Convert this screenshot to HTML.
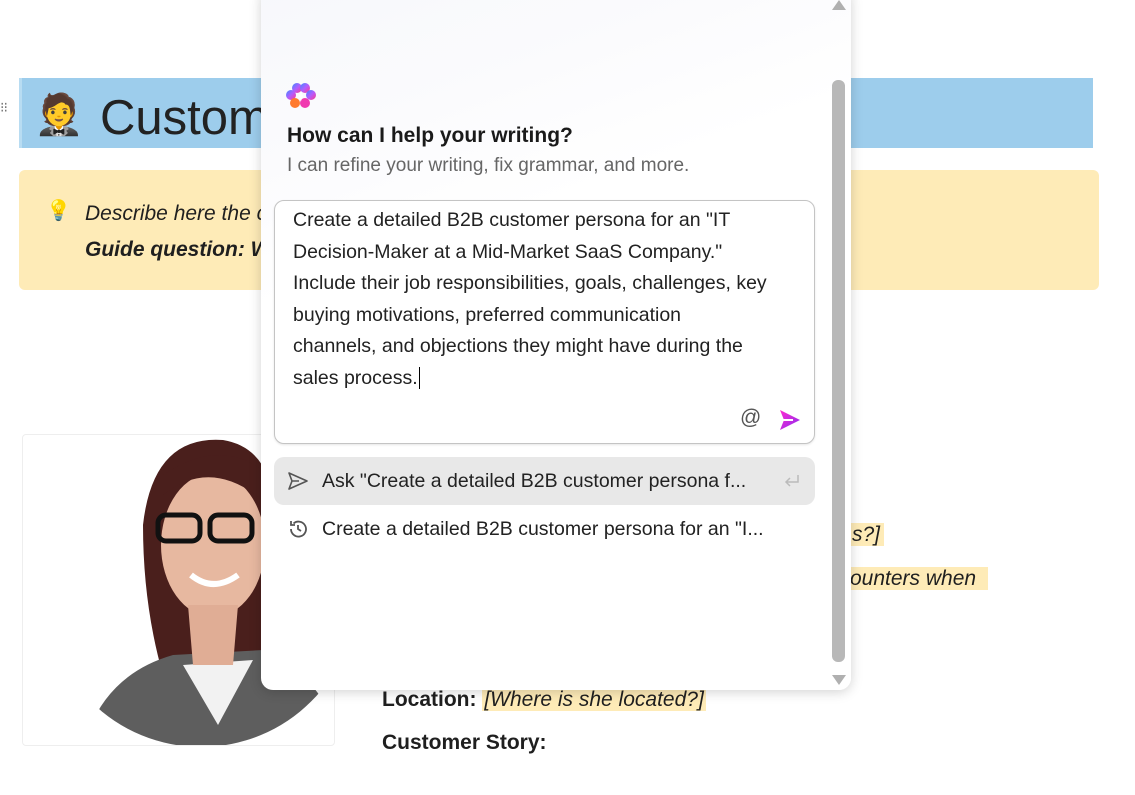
<!DOCTYPE html>
<html><head><meta charset="utf-8"><style>
*{margin:0;padding:0;box-sizing:border-box}
body{width:1135px;height:795px;overflow:hidden;background:#fff;font-family:"Liberation Sans",sans-serif;color:#1f1f1f;position:relative}
.abs{position:absolute}
.hl{background:#feebb7;font-style:italic}
</style></head><body>
<div class="abs" style="left:0;top:104px;font-size:14px;color:#777;letter-spacing:-1px;line-height:6px">⁝⁝</div>
<div class="abs" style="left:19px;top:78px;width:1074px;height:70px;background:#9dcdec;border-left:3px solid #b8dcf2"></div>
<div class="abs" style="left:34px;top:90px;font-size:40px;line-height:50px">🤵</div>
<div class="abs" style="left:100px;top:88px;font-size:49px;line-height:60px;color:#222">Customer Persona</div>
<div class="abs" style="left:19px;top:170px;width:1080px;height:120px;background:#feebb7;border-radius:6px"></div>
<div class="abs" style="left:46px;top:198px;font-size:20px">💡</div>
<div class="abs" style="left:85px;top:196px;font-size:21px;font-style:italic;line-height:36px">Describe here the customer persona of your product<br><b>Guide question:</b> <b>Who is your ideal customer?</b></div>
<div class="abs" style="left:22px;top:434px;width:313px;height:312px;border:1px solid #eee;border-radius:4px;overflow:hidden">
<svg width="313" height="312" viewBox="0 0 313 312">
<defs><clipPath id="c"><circle cx="178" cy="156" r="156"/></clipPath></defs>
<g clip-path="url(#c)">
<rect width="313" height="312" fill="#fff"/>
<path d="M120 90 Q130 0 200 5 Q260 15 250 110 L250 230 L140 240 Q120 170 120 90Z" fill="#4a1f1c"/>
<path d="M60 312 Q80 240 150 220 L240 215 Q300 240 320 312Z" fill="#5e5e5e"/>
<path d="M160 230 L195 290 L230 225Z" fill="#f2f2f2"/>
<ellipse cx="190" cy="110" rx="52" ry="72" fill="#e7b8a0"/>
<path d="M165 170 L215 170 L210 230 L170 230Z" fill="#e0ad95"/>
<path d="M140 60 Q190 20 245 70 L245 40 Q200 0 140 40Z" fill="#4a1f1c"/>
<rect x="135" y="80" width="42" height="26" rx="8" fill="none" stroke="#111" stroke-width="5"/>
<rect x="187" y="80" width="42" height="26" rx="8" fill="none" stroke="#111" stroke-width="5"/>
<path d="M168 140 Q190 158 215 140" stroke="#fff" stroke-width="6" fill="none"/>
</g></svg></div>
<div class="abs" style="left:830px;top:518px;font-size:21px;line-height:34px"><span class="hl" style="padding:0 4px 0 22px">s?]</span></div>
<div class="abs" style="left:830px;top:562px;font-size:21px;line-height:34px"><span class="hl" style="padding:0 12px 0 20px">ounters when</span></div>
<div class="abs" style="left:382px;top:683px;font-size:21px;line-height:34px"><b>Location:</b> <span class="hl" style="padding:0 2px">[Where is she located?]</span></div>
<div class="abs" style="left:382px;top:726px;font-size:21px;line-height:34px"><b>Customer Story:</b></div>

<div class="abs" style="left:261px;top:-12px;width:590px;height:702px;background:linear-gradient(160deg,#f7f8fc 0%,#fbfbfd 20%,#fff 35%);border-radius:12px;box-shadow:0 2px 12px rgba(0,0,0,.18)"></div>
<div class="abs" style="left:832px;top:80px;width:13px;height:582px;background:#b8b8b8;border-radius:6px"></div>
<div class="abs" style="left:832px;top:0;width:0;height:0;border-left:7px solid transparent;border-right:7px solid transparent;border-bottom:10px solid #b0b0b0"></div>
<div class="abs" style="left:832px;top:675px;width:0;height:0;border-left:7px solid transparent;border-right:7px solid transparent;border-top:10px solid #b0b0b0"></div>
<svg class="abs" style="left:286px;top:82px" width="30" height="30" viewBox="0 0 30 30">
<defs><linearGradient id="g" x1="0" y1="0" x2="1" y2="1"><stop offset="0" stop-color="#3b8cff"/><stop offset=".5" stop-color="#b35cff"/><stop offset="1" stop-color="#ff3a8c"/></linearGradient></defs>
<g fill="url(#g)"><circle cx="11" cy="6" r="5"/><circle cx="19" cy="6" r="5"/><circle cx="5" cy="13" r="5"/><circle cx="25" cy="13" r="5"/><circle cx="9" cy="21" r="5" fill="#ff7a2e"/><circle cx="19" cy="21" r="5" fill="#f03ab0"/></g>
<path d="M15 9 L17 14 L15 19 L13 14Z" fill="#fff"/></svg>
<div class="abs" style="left:287px;top:124px;font-size:21px;font-weight:bold;color:#1a1a1a">How can I help your writing?</div>
<div class="abs" style="left:287px;top:155px;font-size:19px;color:#666">I can refine your writing, fix grammar, and more.</div>
<div class="abs" style="left:274px;top:200px;width:541px;height:244px;border:1px solid #c4c4c4;border-radius:10px;background:#fff;box-shadow:0 1px 2px rgba(0,0,0,.1)"></div>
<div class="abs" style="left:293px;top:205px;width:530px;font-size:19.5px;line-height:31.5px;color:#222;white-space:nowrap">Create a detailed B2B customer persona for an "IT<br>Decision-Maker at a Mid-Market SaaS Company."<br>Include their job responsibilities, goals, challenges, key<br>buying motivations, preferred communication<br>channels, and objections they might have during the<br>sales process.<span style="border-left:1.5px solid #000;margin-left:1px"></span></div>
<div class="abs" style="left:740px;top:406px;font-size:21px;color:#555">@</div>
<svg class="abs" style="left:779px;top:409px" width="22" height="22" viewBox="0 0 22 22"><defs><linearGradient id="s" x1="0" y1="0" x2="1" y2="1"><stop offset="0" stop-color="#ff2ad0"/><stop offset="1" stop-color="#8a2cf0"/></linearGradient></defs><path d="M1 1 L21 11 L1 21 L5 11Z M5 11 L14 11" fill="url(#s)"/><path d="M4 11 H14" stroke="#fff" stroke-width="2"/></svg>
<div class="abs" style="left:274px;top:457px;width:541px;height:48px;background:#e8e8e8;border-radius:10px"></div>
<svg class="abs" style="left:287px;top:471px" width="22" height="20" viewBox="0 0 22 20"><path d="M2 2 L20 10 L2 18 L5 10Z M5 10 H12" fill="none" stroke="#555" stroke-width="1.6" stroke-linejoin="round"/></svg>
<div class="abs" style="left:322px;top:470px;font-size:19.5px;color:#222">Ask "Create a detailed B2B customer persona f...</div>
<svg class="abs" style="left:783px;top:473px" width="18" height="16" viewBox="0 0 18 16"><path d="M15 2 V9 H3 M7 5 L3 9 L7 13" fill="none" stroke="#bbb" stroke-width="1.5"/></svg>
<svg class="abs" style="left:287px;top:518px" width="22" height="22" viewBox="0 0 22 22"><path d="M4 11 A7.5 7.5 0 1 0 6.5 5.5 M4 3 V7 H8 M11 7 V11 L14 13" fill="none" stroke="#555" stroke-width="1.8"/></svg>
<div class="abs" style="left:322px;top:518px;font-size:19.5px;color:#222">Create a detailed B2B customer persona for an "I...</div>
</body></html>
